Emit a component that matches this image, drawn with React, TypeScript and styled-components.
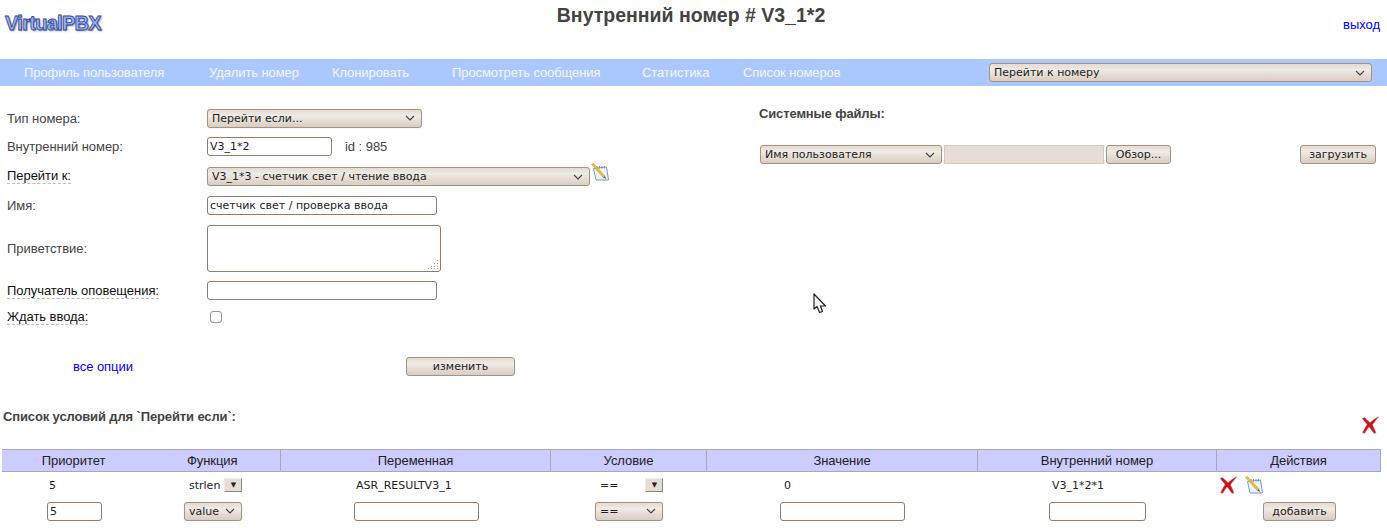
import styled, { createGlobalStyle } from 'styled-components'

const chevron =
  "url(\"data:image/svg+xml,%3Csvg xmlns='http://www.w3.org/2000/svg' width='10' height='6'%3E%3Cpath d='M1 1l4 4 4-4' fill='none' stroke='%23444' stroke-width='1.2'/%3E%3C/svg%3E\")"

const gripDots =
  "url(\"data:image/svg+xml,%3Csvg xmlns='http://www.w3.org/2000/svg' width='11' height='11' fill='%23a89c90'%3E%3Crect x='9' y='1' width='1' height='1'/%3E%3Crect x='6' y='4' width='1' height='1'/%3E%3Crect x='9' y='4' width='1' height='1'/%3E%3Crect x='3' y='7' width='1' height='1'/%3E%3Crect x='6' y='7' width='1' height='1'/%3E%3Crect x='9' y='7' width='1' height='1'/%3E%3Crect x='0' y='9' width='1' height='1'/%3E%3Crect x='3' y='9' width='1' height='1'/%3E%3Crect x='6' y='9' width='1' height='1'/%3E%3Crect x='9' y='9' width='1' height='1'/%3E%3C/svg%3E\")"

const beige = 'linear-gradient(#e4dbd2 0%, #f0ebe6 35%, #e6ded6 60%, #d8cdc2 100%)'

const GlobalStyle = createGlobalStyle`
  html, body { margin: 0; padding: 0; background: #fff; }
  body {
    font-family: "Liberation Sans", Arial, sans-serif;
    font-size: 13px;
    letter-spacing: -0.05px;
    color: #444;
    overflow: hidden;
  }
`

const Page = styled.div`
  position: relative;
  width: 1387px;
  height: 528px;
  overflow: hidden;
`

const Header = styled.header`
  display: flex;
  height: 59px;
`

const Logo = styled.div`
  width: 200px;
  padding: 11px 0 0 5px;
  font-size: 20px;
  line-height: 25px;
  font-weight: bold;
  letter-spacing: -0.7px;
  color: #9db4ee;
  -webkit-text-stroke: 0.8px #2c459f;
  text-shadow: 1px 1px 2px #6c7484;
`

const Title = styled.h1`
  flex: 1;
  margin: 0;
  padding: 5px 10px 0 0;
  font-size: 19.5px;
  line-height: 21px;
  font-weight: bold;
  letter-spacing: 0;
  color: #444;
  text-align: center;
`

const Logout = styled.a`
  width: 200px;
  padding: 17px 7px 0 0;
  box-sizing: border-box;
  text-align: right;
  color: #00f;
  line-height: 15px;
`

const Nav = styled.nav`
  display: flex;
  align-items: center;
  height: 27px;
  background: #abc8fe;
  padding-left: 24px;
`

const NavItem = styled.a<{ $w: number }>`
  width: ${({ $w }) => $w}px;
  flex: none;
  color: #f2f5fb;
  white-space: nowrap;
  letter-spacing: -0.09px;
`

const Select = styled.select<{ $w: number; $nudge?: number }>`
  appearance: none;
  box-sizing: border-box;
  width: ${({ $w }) => $w}px;
  height: 19px;
  margin-top: ${({ $nudge }) => $nudge ?? 0}px;
  padding: 0 18px 0 4px;
  border: 1px solid #a39382;
  border-radius: 3px;
  background: ${chevron} no-repeat right 6px center, ${beige};
  font-family: "DejaVu Sans", sans-serif;
  font-size: 11px;
  color: #222;
  box-shadow: 0 0 1px #cfc6bc;
`

const NavSelect = styled(Select)`
  margin-left: 6px;
`

const Main = styled.main`
  display: flex;
  height: 304px;
`

const FormColumn = styled.section`
  width: 759px;
  flex: none;
  padding: 18px 0 0 7px;
  box-sizing: border-box;
`

const Row = styled.div<{ $h: number }>`
  display: flex;
  align-items: center;
  height: ${({ $h }) => $h}px;
`

const LabelCell = styled.div`
  width: 200px;
  flex: none;
`

const HintLabel = styled.span`
  color: #111;
  border-bottom: 1px dashed #bbb;
`

const TextInput = styled.input<{ $w: number }>`
  box-sizing: border-box;
  width: ${({ $w }) => $w}px;
  height: 19px;
  padding: 0 2px;
  border: 1px solid #8f7d6a;
  border-radius: 3px;
  background: #fff;
  font-family: "DejaVu Sans", sans-serif;
  font-size: 11px;
  color: #222;
  outline: none;
`

const Greeting = styled.textarea`
  box-sizing: border-box;
  width: 234px;
  height: 47px;
  margin: 0;
  border: 1px solid #8f7d6a;
  border-radius: 3px;
  display: block;
  resize: none;
  background: #fff ${gripDots} no-repeat right 1px bottom 1px;
`

const Check = styled.input`
  appearance: none;
  box-sizing: border-box;
  width: 12px;
  height: 12px;
  margin: 0 0 0 3px;
  border: 1px solid #a39382;
  border-radius: 3px;
  background: #fff;
`

const IdText = styled.span`
  margin-left: 13px;
  color: #444;
`

const EditSlot = styled.span`
  display: inline-flex;
  margin: -7px 0 0 1px;
`

const ActionsRow = styled.div`
  display: flex;
  align-items: center;
  height: 28px;
  margin-top: 22px;
`

const OptionsLink = styled.a`
  width: 399px;
  flex: none;
  padding-left: 66px;
  box-sizing: border-box;
  color: #00f;
`

const Button = styled.button<{ $w: number }>`
  box-sizing: border-box;
  width: ${({ $w }) => $w}px;
  height: 19px;
  padding: 0;
  border: 1px solid #a39382;
  border-radius: 3px;
  background: ${beige};
  font-family: "DejaVu Sans", sans-serif;
  font-size: 11px;
  color: #222;
`

const FilesColumn = styled.section`
  flex: 1;
  padding-top: 20px;
  font-size: 13px;
`

const SectionTitle = styled.h2`
  margin: 0;
  font-size: 13px;
  line-height: 16px;
  font-weight: bold;
  letter-spacing: -0.13px;
  color: #444;
`

const UploadRow = styled.div`
  display: flex;
  align-items: center;
  gap: 2px;
  margin: 23px 0 0 1px;
`

const FileName = styled.div`
  box-sizing: border-box;
  width: 160px;
  height: 19px;
  background: #e6ddd4;
  border: 1px solid #d4cabf;
`

const UploadButton = styled(Button)`
  margin-left: 127px;
`

const ConditionsHead = styled.div`
  display: flex;
  justify-content: space-between;
  height: 59px;
  padding: 19px 7px 0 3px;
  box-sizing: border-box;
`

const ClearAll = styled.span`
  display: inline-flex;
  margin-top: 7px;
`

const Table = styled.table`
  width: 1378px;
  margin-left: 2px;
  border-collapse: collapse;
  table-layout: fixed;
`

const HeadCell = styled.th<{ $plain?: boolean }>`
  height: 21px;
  padding: 0 0 0 1px;
  background: #ccf;
  border-top: 1px solid #a8a8b4;
  border-bottom: 1px solid #a8a8b4;
  border-right: ${({ $plain }) => ($plain ? 'none' : '1px solid #a8a8b4')};
  font-size: 13px;
  font-weight: normal;
  color: #222;
`

const Cell = styled.td<{ $pad: number }>`
  height: 26px;
  padding: 0 0 0 ${({ $pad }) => $pad}px;
  font-family: "DejaVu Sans", sans-serif;
  font-size: 11px;
  letter-spacing: 0;
  color: #222;
  white-space: nowrap;
`

const CellFlex = styled.div<{ $gap: number }>`
  display: flex;
  align-items: center;
  gap: ${({ $gap }) => $gap}px;
`

const MiniArrow = styled.span`
  box-sizing: border-box;
  display: inline-flex;
  align-items: center;
  justify-content: center;
  width: 18px;
  height: 14px;
  background: #e6ded6;
  border-right: 1px solid #8f8578;
  border-bottom: 1px solid #8f8578;
  border-top: 1px solid #efeae5;
  border-left: 1px solid #efeae5;
  font-size: 7px;
  color: #222;
`

const Pointer = styled.svg`
  position: absolute;
  left: 813px;
  top: 293px;
`

function CrossIcon() {
  return (
    <svg width="19" height="18" viewBox="0 0 19 18">
      <path d="M1 2.500 3.500 1.500 9 6.500C11.500 4.500 14.500 2 18 .5c-2.500 3-5 6-6.500 8.500 1.300 2.300 2.500 4.800 3.500 8l-2 .5C11 14.500 9.500 12.500 8 11 6.500 13 5 15 3.500 17.500L1.500 16.500C3 13.500 4.500 11 6 8.500 4.500 6.500 3 4.500 1 2.500z" fill="#c4141c" stroke="#e88a8a" strokeWidth="0.5" />
    </svg>
  )
}

function NoteIcon() {
  return (
    <svg width="18" height="18" viewBox="0 0 18 18">
      <path d="M2.500 5.500 5 17h12.500L15.500 4z" fill="#eef4fb" stroke="#6f9cc8" strokeWidth="1" />
      <path d="M6 3v2.500M8.500 3v2.500M11 3v2.500M13.500 3v2.500" stroke="#8a8a8a" strokeWidth="0.9" />
      <path d="M.5 1.500 2.500.5 14 13l-1.800 1.500z" fill="#eebf34" stroke="#c0932a" strokeWidth="0.5" />
      <path d="M12.200 14.500 14 13l1 3z" fill="#555" />
    </svg>
  )
}

export default function App() {
  return (
    <Page>
      <GlobalStyle />
      <Header>
        <Logo>VirtualPBX</Logo>
        <Title>Внутренний номер # V3_1*2</Title>
        <Logout>выход</Logout>
      </Header>

      <Nav>
        <NavItem $w={185}>Профиль пользователя</NavItem>
        <NavItem $w={123}>Удалить номер</NavItem>
        <NavItem $w={120}>Клонировать</NavItem>
        <NavItem $w={190}>Просмотреть сообщения</NavItem>
        <NavItem $w={101}>Статистика</NavItem>
        <NavItem $w={240}>Список номеров</NavItem>
        <NavSelect $w={383}>
          <option>Перейти к номеру</option>
        </NavSelect>
      </Nav>

      <Main>
        <FormColumn>
          <Row $h={28}>
            <LabelCell>Тип номера:</LabelCell>
            <Select $w={215}>
              <option>Перейти если...</option>
            </Select>
          </Row>
          <Row $h={28}>
            <LabelCell>Внутренний номер:</LabelCell>
            <TextInput $w={125} defaultValue="V3_1*2" />
            <IdText>id : 985</IdText>
          </Row>
          <Row $h={31}>
            <LabelCell>
              <HintLabel>Перейти к:</HintLabel>
            </LabelCell>
            <Select $w={383} $nudge={2}>
              <option>V3_1*3 - счетчик свет / чтение ввода</option>
            </Select>
            <EditSlot>
              <NoteIcon />
            </EditSlot>
          </Row>
          <Row $h={28}>
            <LabelCell>Имя:</LabelCell>
            <TextInput $w={230} defaultValue="счетчик свет / проверка ввода" />
          </Row>
          <Row $h={58}>
            <LabelCell>Приветствие:</LabelCell>
            <Greeting />
          </Row>
          <Row $h={26}>
            <LabelCell>
              <HintLabel>Получатель оповещения:</HintLabel>
            </LabelCell>
            <TextInput $w={230} />
          </Row>
          <Row $h={27}>
            <LabelCell>
              <HintLabel>Ждать ввода:</HintLabel>
            </LabelCell>
            <Check type="checkbox" />
          </Row>
          <ActionsRow>
            <OptionsLink>все опции</OptionsLink>
            <Button $w={109}>изменить</Button>
          </ActionsRow>
        </FormColumn>

        <FilesColumn>
          <SectionTitle>Системные файлы:</SectionTitle>
          <UploadRow>
            <Select $w={182}>
              <option>Имя пользователя</option>
            </Select>
            <FileName />
            <Button $w={65}>Обзор...</Button>
            <UploadButton $w={76}>загрузить</UploadButton>
          </UploadRow>
        </FilesColumn>
      </Main>

      <ConditionsHead>
        <SectionTitle>Список условий для `Перейти если`:</SectionTitle>
        <ClearAll>
          <CrossIcon />
        </ClearAll>
      </ConditionsHead>

      <Table>
        <colgroup>
          <col width="142" />
          <col width="136" />
          <col width="270" />
          <col width="156" />
          <col width="271" />
          <col width="239" />
          <col width="164" />
        </colgroup>
        <thead>
          <tr>
            <HeadCell $plain>Приоритет</HeadCell>
            <HeadCell>Функция</HeadCell>
            <HeadCell>Переменная</HeadCell>
            <HeadCell>Условие</HeadCell>
            <HeadCell>Значение</HeadCell>
            <HeadCell>Внутренний номер</HeadCell>
            <HeadCell>Действия</HeadCell>
          </tr>
        </thead>
        <tbody>
          <tr>
            <Cell $pad={47}>5</Cell>
            <Cell $pad={45}>
              <CellFlex $gap={4}>
                strlen <MiniArrow>▼</MiniArrow>
              </CellFlex>
            </Cell>
            <Cell $pad={76}>ASR_RESULTV3_1</Cell>
            <Cell $pad={50}>
              <CellFlex $gap={27}>
                == <MiniArrow>▼</MiniArrow>
              </CellFlex>
            </Cell>
            <Cell $pad={78}>0</Cell>
            <Cell $pad={75}>V3_1*2*1</Cell>
            <Cell $pad={3}>
              <CellFlex $gap={7}>
                <CrossIcon />
                <NoteIcon />
              </CellFlex>
            </Cell>
          </tr>
          <tr>
            <Cell $pad={45}>
              <TextInput $w={55} defaultValue="5" />
            </Cell>
            <Cell $pad={40}>
              <Select $w={58}>
                <option>value</option>
              </Select>
            </Cell>
            <Cell $pad={74}>
              <TextInput $w={125} />
            </Cell>
            <Cell $pad={45}>
              <Select $w={68}>
                <option>==</option>
              </Select>
            </Cell>
            <Cell $pad={74}>
              <TextInput $w={125} />
            </Cell>
            <Cell $pad={72}>
              <TextInput $w={97} />
            </Cell>
            <Cell $pad={47}>
              <Button $w={73}>добавить</Button>
            </Cell>
          </tr>
        </tbody>
      </Table>

      <Pointer width="14" height="22" viewBox="0 0 14 22">
        <path d="M1 1v15l3-2.500 2.500 6 3-1-2-5.500h5z" fill="#f4f4f4" stroke="#222" strokeWidth="1.2" strokeLinejoin="round" />
      </Pointer>
    </Page>
  )
}
